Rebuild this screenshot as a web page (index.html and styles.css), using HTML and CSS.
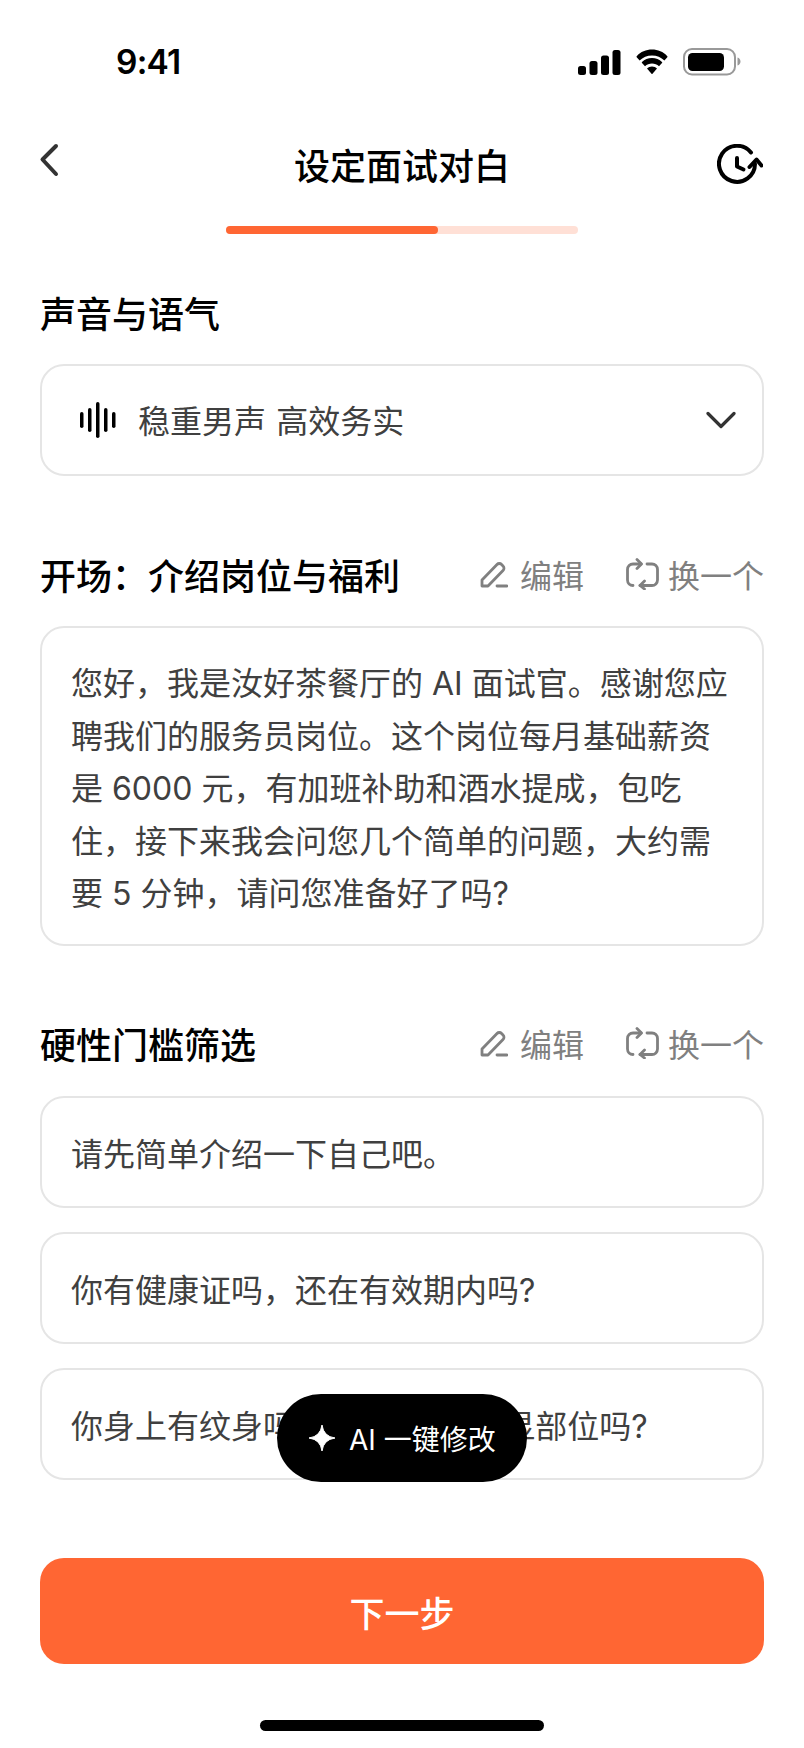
FILE: index.html
```html
<!DOCTYPE html>
<html lang="zh">
<head>
<meta charset="utf-8">
<title>设定面试对白</title>
<link rel="stylesheet" href="styles.css">
</head>
<body>
<div class="app">
  <div class="status">
    <span class="time">9:41</span>
    <div class="status-icons">
      <svg class="i-signal" width="43" height="25" viewBox="0 0 43 25"><rect x="0" y="16" width="8" height="9" rx="2.5"/><rect x="11.5" y="11" width="8" height="14" rx="2.5"/><rect x="23" y="5.5" width="8" height="19.5" rx="2.5"/><rect x="34.5" y="0" width="8" height="25" rx="2.5"/></svg>
      <svg class="i-wifi" width="36" height="26" viewBox="0 0 36 26"><path d="M18 6.5c4.8 0 9.2 1.9 12.4 5l2.9-3.3a.7.7 0 0 0 0-1C29.300 2.700 23.900.5 18 .500S6.700 2.700 2.700 7.200a.7.700 0 0 0 0 1l2.900 3.300c3.200-3.100 7.600-5 12.400-5z"/><path d="M18 14.500c2.700 0 5.100 1 7 2.700l3-3.300a.7.7 0 0 0 0-1C25.400 10.300 21.900 9 18 9s-7.400 1.300-10 3.900a.7.700 0 0 0 0 1l3 3.300c1.900-1.700 4.300-2.700 7-2.700z"/><path d="M18 17.500c-2 0-3.800.8-5 2l4.500 5.300a.7.7 0 0 0 1 0L23 19.500c-1.200-1.200-3-2-5-2z"/></svg>
      <svg class="i-batt" width="58" height="28" viewBox="0 0 58 28"><rect x="1" y="1" width="51" height="25.500" rx="8" fill="none" stroke="#999" stroke-width="2"/><rect x="5" y="5" width="36" height="18" rx="4.500"/><path d="M54.500 9.500v8c1.800-.5 3-2.200 3-4s-1.200-3.500-3-4z" fill="#999"/></svg>
    </div>
  </div>

  <header class="nav">
    <svg class="i-back" width="22" height="34" viewBox="0 0 22 34"><path d="M18 3 4.500 16.500 18 31" fill="none" stroke="#333" stroke-width="4" stroke-linecap="round" stroke-linejoin="round"/></svg>
    <h1 class="title">设定面试对白</h1>
    <svg class="i-history" width="46" height="40" viewBox="0 0 46 40"><path d="M38 20A18 18 0 1 1 34 8.500" fill="none" stroke="#000" stroke-width="4" stroke-linecap="round"/><path d="M20 14V22.500L26.500 25.500" fill="none" stroke="#000" stroke-width="4" stroke-linecap="round" stroke-linejoin="round"/><path d="M32.500 23 39.500 15.500 44.500 21.500" fill="none" stroke="#000" stroke-width="4" stroke-linecap="round" stroke-linejoin="round"/></svg>
  </header>

  <div class="progress"><div class="progress-fill"></div></div>

  <main class="content">
    <section class="sec sec-voice">
      <h2 class="sec-title">声音与语气</h2>
      <div class="card card-select">
        <svg class="i-wave" width="36" height="36" viewBox="0 0 36 36"><rect x="0" y="10" width="3.500" height="16" rx="1.750"/><rect x="8" y="6" width="3.500" height="24" rx="1.750"/><rect x="16" y="0" width="3.500" height="36" rx="1.750"/><rect x="24" y="6" width="3.500" height="24" rx="1.750"/><rect x="32" y="10" width="3.500" height="16" rx="1.750"/></svg>
        <span class="select-text">稳重男声 高效务实</span>
        <svg class="i-down" width="30" height="18" viewBox="0 0 30 18"><path d="M2 2.500 15 15.500 28 2.500" fill="none" stroke="#333" stroke-width="3.200" stroke-linecap="round" stroke-linejoin="round"/></svg>
      </div>
    </section>

    <section class="sec sec-open">
      <div class="sec-head">
        <h2 class="sec-title">开场&#xFF1A;介绍岗位与福利</h2>
        <div class="actions">
          <span class="action">
            <svg class="i-edit" width="28" height="28" viewBox="0 0 28 28"><path d="M2 26V20L17 4.500a3.200 3.200 0 0 1 4.600 0l1.400 1.400a3.200 3.200 0 0 1 0 4.600L8 26z" fill="none" stroke="#808080" stroke-width="2.800" stroke-linejoin="round"/><path d="M17 26h10" stroke="#808080" stroke-width="2.800" stroke-linecap="round"/></svg>
            编辑
          </span>
          <span class="action">
            <svg class="i-swap" width="33" height="32" viewBox="0 0 33 32"><path d="M7 27.500A5.500 5.500 0 0 1 1.500 22V11.500A5.500 5.500 0 0 1 7 6H15" fill="none" stroke="#808080" stroke-width="2.800" stroke-linecap="round"/><path d="M11 1.500 15.500 6 11 10.500" fill="none" stroke="#808080" stroke-width="2.800" stroke-linecap="round" stroke-linejoin="round"/><path d="M21 6H26A5.500 5.500 0 0 1 31.500 11.500V22A5.500 5.500 0 0 1 26 27.500H14" fill="none" stroke="#808080" stroke-width="2.800" stroke-linecap="round"/><path d="M18.500 23 14 27.500 18.500 31" fill="none" stroke="#808080" stroke-width="2.800" stroke-linecap="round" stroke-linejoin="round"/></svg>
            换一个
          </span>
        </div>
      </div>
      <div class="card card-para">您好&#xFF0C;我是汝好茶餐厅的 AI 面试官。感谢您应聘我们的服务员岗位。这个岗位每月基础薪资是 6000 元&#xFF0C;有加班补助和酒水提成&#xFF0C;包吃住&#xFF0C;接下来我会问您几个简单的问题&#xFF0C;大约需要 5 分钟&#xFF0C;请问您准备好了吗?</div>
    </section>

    <section class="sec sec-filter">
      <div class="sec-head">
        <h2 class="sec-title">硬性门槛筛选</h2>
        <div class="actions">
          <span class="action">
            <svg class="i-edit" width="28" height="28" viewBox="0 0 28 28"><path d="M2 26V20L17 4.500a3.200 3.200 0 0 1 4.600 0l1.400 1.400a3.200 3.200 0 0 1 0 4.600L8 26z" fill="none" stroke="#808080" stroke-width="2.800" stroke-linejoin="round"/><path d="M17 26h10" stroke="#808080" stroke-width="2.800" stroke-linecap="round"/></svg>
            编辑
          </span>
          <span class="action">
            <svg class="i-swap" width="33" height="32" viewBox="0 0 33 32"><path d="M7 27.500A5.500 5.500 0 0 1 1.500 22V11.500A5.500 5.500 0 0 1 7 6H15" fill="none" stroke="#808080" stroke-width="2.800" stroke-linecap="round"/><path d="M11 1.500 15.500 6 11 10.500" fill="none" stroke="#808080" stroke-width="2.800" stroke-linecap="round" stroke-linejoin="round"/><path d="M21 6H26A5.500 5.500 0 0 1 31.500 11.500V22A5.500 5.500 0 0 1 26 27.500H14" fill="none" stroke="#808080" stroke-width="2.800" stroke-linecap="round"/><path d="M18.500 23 14 27.500 18.500 31" fill="none" stroke="#808080" stroke-width="2.800" stroke-linecap="round" stroke-linejoin="round"/></svg>
            换一个
          </span>
        </div>
      </div>
      <div class="q-list">
        <div class="card card-q">请先简单介绍一下自己吧。</div>
        <div class="card card-q">你有健康证吗&#xFF0C;还在有效期内吗?</div>
        <div class="card card-q">你身上有纹身吗?纹身在外露明显部位吗?</div>
      </div>
    </section>

    <button class="next">下一步</button>
  </main>

  <div class="home-bar"></div>

  <div class="ai-pill">
    <svg class="i-star" width="28" height="28" viewBox="0 0 28 28"><path d="M14 1Q15.500 12.500 27 14 15.500 15.500 14 27 12.500 15.500 1 14 12.500 12.500 14 1z" fill="#fff" stroke="#fff" stroke-width="1" stroke-linejoin="round"/></svg>
    <span class="ai-text">AI 一键修改</span>
  </div>
</div>
</body>
</html>
```

FILE: styles.css
```css
* { box-sizing: border-box; }
html, body { margin: 0; padding: 0; background: #fff; }
body {
  font-family: "Inter", "Noto Sans CJK SC", "Noto Sans", sans-serif;
  color: #000;
}
.app {
  position: relative;
  width: 804px;
  height: 1748px;
  overflow: hidden;
  background: #fff;
}
.status {
  display: flex;
  justify-content: space-between;
  align-items: center;
  height: 28px;
  margin-top: 48px;
  padding: 0 63px 0 116px;
}
.time {
  font-size: 33.500px;
  font-weight: 600;
  letter-spacing: -0.8px;
  line-height: 28px;
}
.status-icons { display: flex; align-items: center; gap: 13px; }
.status-icons svg { display: block; fill: #000; }
.nav {
  display: grid;
  grid-template-columns: 1fr auto 1fr;
  align-items: center;
  height: 48px;
  margin-top: 64px;
  padding: 0 41px 0 38px;
}
.i-back { margin-top: -8px; justify-self: start; }
.i-history { margin-top: -1px; justify-self: end; }
.title {
  margin: 0 0 0 3px;
  font-size: 36px;
  font-weight: 500;
  line-height: 48px;
  font-family: "Noto Sans CJK SC", sans-serif;
}
.progress {
  width: 352px;
  height: 8px;
  margin: 38px auto 0;
  border-radius: 4px;
  background: #ffe0d6;
}
.progress-fill {
  width: 212px;
  height: 8px;
  border-radius: 4px;
  background: #ff6633;
}
.content {
  display: flex;
  flex-direction: column;
  padding: 0 40px;
}
.sec-title {
  margin: 0;
  font-family: "Noto Sans CJK SC", sans-serif;
  font-size: 36px;
  font-weight: 500;
  line-height: 48px;
}
.sec-voice { margin-top: 54px; }
.sec-voice .sec-title { margin-bottom: 28px; }
.card {
  border: 2px solid #e5e5e5;
  border-radius: 24px;
  background: #fff;
  color: #404040;
  font-size: 32px;
  font-family: "Inter", "Noto Sans CJK SC", sans-serif;
}
.card-select {
  display: flex;
  align-items: center;
  height: 112px;
  padding: 0 26px 0 38px;
}
.select-text { flex: 1; margin-left: 22px; margin-top: -2px; font-family: "Noto Sans CJK SC", sans-serif; word-spacing: 3px; }
.i-wave { fill: #000; display: block; }
.sec-head {
  display: flex;
  justify-content: space-between;
  align-items: center;
  height: 48px;
}
.sec-open { margin-top: 74px; }
.sec-open .sec-head { margin-bottom: 28px; }
.sec-filter { margin-top: 73px; }
.sec-filter .sec-head { margin-bottom: 29px; }
.actions { display: flex; gap: 42px; }
.action {
  display: flex;
  align-items: center;
  gap: 12px;
  font-family: "Noto Sans CJK SC", sans-serif;
  font-size: 32px;
  color: #808080;
  line-height: 48px;
}
.i-swap { margin-right: -3px; }
.card-para {
  padding: 30px 29px 0;
  line-height: 52.500px;
  height: 320px;
}
.q-list { display: flex; flex-direction: column; gap: 24px; }
.card-q {
  display: flex;
  align-items: center;
  height: 112px;
  padding: 0 29px;
}
.next {
  display: block;
  width: 724px;
  height: 106px;
  margin-top: 78px;
  border: 0;
  border-radius: 24px;
  background: #ff6633;
  color: #fff;
  font-family: "Noto Sans CJK SC", sans-serif;
  font-size: 35px;
  font-weight: 500;
}
.home-bar {
  width: 284px;
  height: 11px;
  margin: 56px auto 0;
  border-radius: 6px;
  background: #000;
}
.ai-pill {
  position: absolute;
  left: 277px;
  top: 1394px;
  width: 250px;
  height: 88px;
  border-radius: 44px;
  background: #000;
  color: #fff;
  display: flex;
  align-items: center;
  gap: 13px;
  padding-left: 31px;
}
.ai-text {
  font-family: "Inter", "Noto Sans CJK SC", sans-serif;
  font-size: 28px;
}
```
